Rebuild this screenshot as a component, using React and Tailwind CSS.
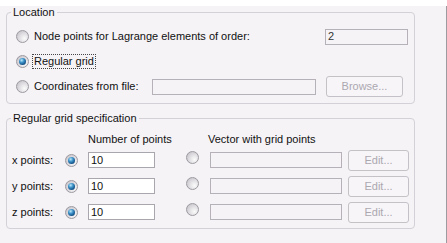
// App.jsx - grid location options panel
import React from 'react';

const font = { fontFamily: '"Liberation Sans", Arial, sans-serif' };

function Radio({ checked }) {
  return (
    <span className="relative inline-flex w-[13px] h-[13px] shrink-0 items-center justify-center rounded-full border border-[#9c9aa0] bg-[radial-gradient(circle_at_68%_68%,#fbfbfb_0%,#dedce0_50%,#bcbac0_100%)]">
      {checked && (
        <span className="w-[7px] h-[7px] rounded-full bg-[radial-gradient(circle_at_38%_32%,#bfeafc_0%,#3f94c9_35%,#15558c_70%,#0a2f55_100%)]" />
      )}
    </span>
  );
}

function TextBox({ value, disabled, className }) {
  return (
    <div
      className={
        'h-[16px] border flex items-center pl-[2px] text-[11px] leading-none ' +
        (disabled ? 'border-[#b6b1b9] bg-[#f5f3f6] ' : 'border-[#a9a7ad] bg-white ') +
        className
      }
    >
      {value}
    </div>
  );
}

function Button({ label, className }) {
  return (
    <div
      className={
        'flex items-center justify-center rounded-[3px] border border-[#c4c1c7] bg-[#f7f5f8] text-[#aca8b0] text-[11px] ' +
        className
      }
    >
      {label}
    </div>
  );
}

const rows = ['x points:', 'y points:', 'z points:'];

export default function App() {
  return (
    <div className="w-[447px] h-[243px] bg-[#f5f3f6] text-[11px] text-[#111]" style={font}>
      <div className="w-[447px] h-[241px] border-r border-b-2 border-r-[#9d9aa0] border-b-[#858386]">
        {/* Location group */}
        <fieldset className="ml-[6px] mt-[6px] w-[409px] border border-[#d3d0d7] rounded-[4px] pb-[4px]">
          <legend className="ml-[4px] px-[2px] leading-[13px]">Location</legend>
          <div className="pt-[5px] pl-[9px] flex flex-col">
            <div className="h-[25px] flex items-center">
              <Radio />
              <span className="ml-[5px]">Node points for Lagrange elements of order:</span>
              <TextBox value="2" disabled className="ml-auto mr-[6px] w-[83px] text-[#333]" />
            </div>
            <div className="h-[25px] flex items-center">
              <Radio checked />
              <span className="ml-[4px] px-[1px] outline outline-1 outline-dotted outline-[#444] leading-[13px]">
                Regular grid
              </span>
            </div>
            <div className="h-[25px] flex items-center">
              <Radio />
              <span className="ml-[5px] w-[118px]">Coordinates from file:</span>
              <TextBox disabled className="w-[164px]" />
              <Button label="Browse..." className="ml-[10px] w-[77px] h-[21px]" />
            </div>
          </div>
        </fieldset>

        {/* Regular grid specification group */}
        <fieldset className="ml-[6px] mt-[8px] w-[409px] border border-[#d3d0d7] rounded-[4px] pb-[3px]">
          <legend className="ml-[4px] px-[2px] leading-[13px]">Regular grid specification</legend>
          <div className="pt-[6px] pl-[5px] flex flex-col">
            <div className="h-[16px] flex items-center">
              <span className="ml-[76px] w-[120px]">Number of points</span>
              <span>Vector with grid points</span>
            </div>
            {rows.map((r) => (
              <div key={r} className="h-[26px] flex items-center">
                <span className="w-[53px]">{r}</span>
                <Radio checked />
                <TextBox value="10" className="ml-[10px] w-[67px]" />
                <span className="ml-[31px]">
                  <Radio />
                </span>
                <TextBox disabled className="ml-[11px] w-[132px]" />
                <Button label="Edit..." className="ml-[6px] w-[61px] h-[21px]" />
              </div>
            ))}
          </div>
        </fieldset>
      </div>
    </div>
  );
}
